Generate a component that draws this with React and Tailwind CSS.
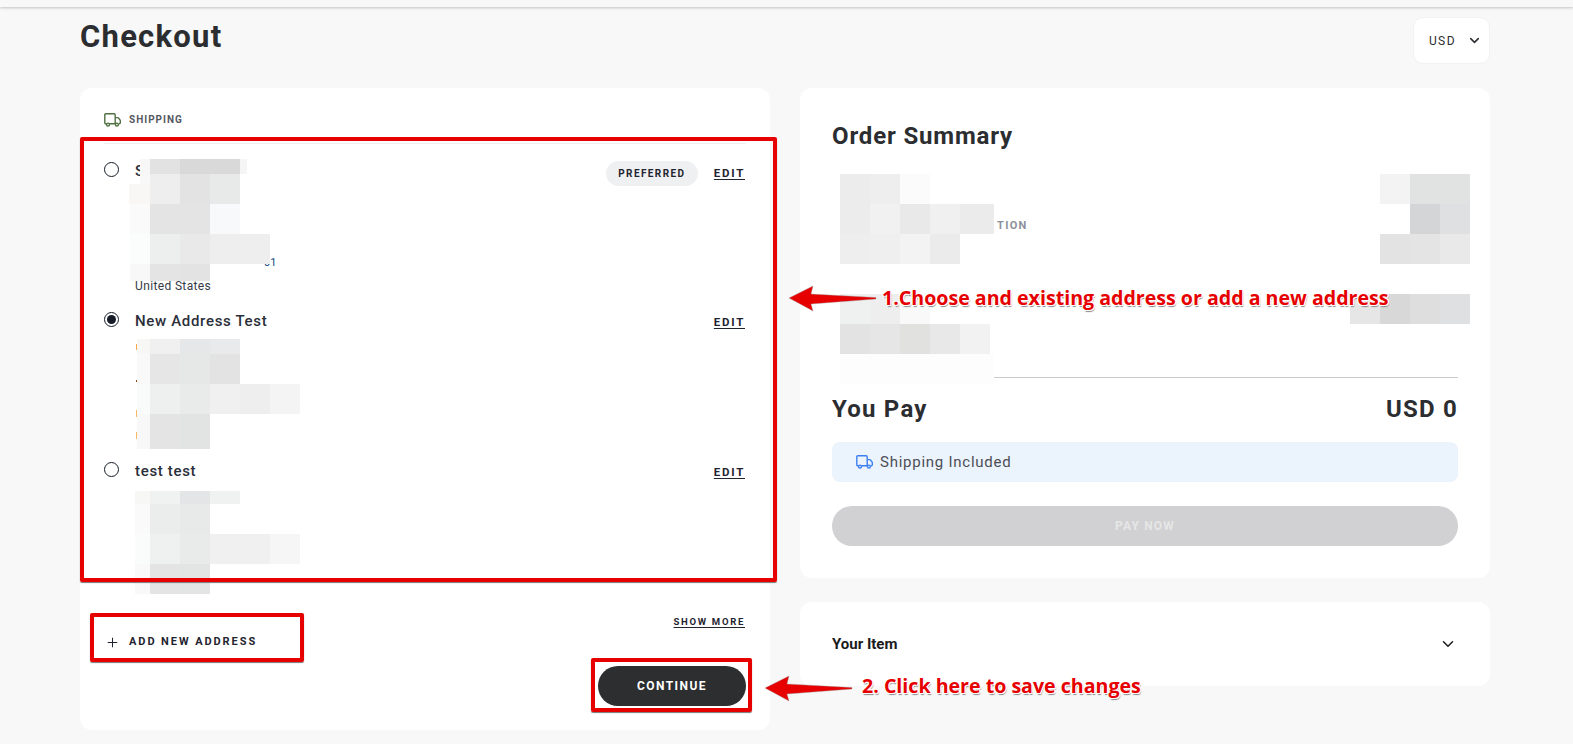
import React from "react";
import { ChevronDown, Plus } from "lucide-react";

const font = "font-['Roboto','Liberation_Sans',sans-serif]";

// pixelated (blurred out) customer data: [x, y, w, h, colour]
const addressMosaics = [
  [
    [4, 0, 10, 15, "#f7f7f7"], [14, 0, 30, 15, "#e2e2e2"], [44, 0, 60, 15, "#d9d9d9"], [104, 0, 7, 15, "#f5f5f5"],
    [4, 15, 10, 10, "#f8f8f8"], [14, 15, 30, 30, "#eeeeee"], [44, 15, 30, 30, "#e3e3e3"], [74, 15, 30, 30, "#e8e9e9"],
    [-7, 25, 21, 20, "#f8f7f6"],
    [-6, 45, 20, 30, "#fafafa"], [14, 45, 30, 30, "#e4e4e4"], [44, 45, 30, 30, "#e4e4e4"], [74, 45, 30, 30, "#f8f9fb"],
    [-6, 75, 20, 30, "#fbfcfc"], [14, 75, 30, 30, "#edeeee"], [44, 75, 30, 30, "#e9e9e9"], [74, 75, 60, 30, "#eeeeee"],
    [-6, 105, 20, 17, "#f8f8f8"], [14, 105, 30, 17, "#e4e4e4"], [44, 105, 30, 17, "#e2e3e2"],
  ],
  [
    // bits of the address text that stick out at the left of the mosaic
    [0, 5, 1, 6, "#f5a94a"], [0, 41, 1, 2, "#8a4a10"], [0, 71, 1, 7, "#f7b765"], [0, 93, 1, 7, "#f7b765"],
    [1, 0, 13, 15, "#f7f7f6"], [14, 0, 30, 15, "#f0f0f0"], [44, 0, 30, 15, "#e6e7e8"], [74, 0, 30, 15, "#e9eaeb"],
    [1, 15, 13, 30, "#f9f9f9"], [14, 15, 30, 30, "#e6e6e6"], [44, 15, 30, 30, "#e6e7e7"], [74, 15, 30, 30, "#e3e3e3"],
    [1, 45, 13, 30, "#f9fbfa"], [14, 45, 30, 30, "#eef0ef"], [44, 45, 30, 30, "#e9eaea"], [74, 45, 30, 30, "#f0f0f0"], [104, 45, 30, 30, "#eeeeee"], [134, 45, 30, 30, "#f4f4f4"],
    [1, 75, 13, 35, "#f8f8f8"], [14, 75, 30, 35, "#e4e4e4"], [44, 75, 30, 35, "#e2e3e3"],
  ],
  [
    [-1, 0, 15, 13, "#f7f7f6"], [14, 0, 30, 13, "#f0f1f1"], [44, 0, 30, 13, "#e4e5e7"], [74, 0, 30, 13, "#f0f1f1"],
    [-1, 13, 15, 30, "#fafafa"], [14, 13, 30, 30, "#ebecec"], [44, 13, 30, 30, "#e8e9e9"],
    [-1, 43, 15, 30, "#fafbfb"], [14, 43, 30, 30, "#eff0f0"], [44, 43, 30, 30, "#e9eaea"], [74, 43, 30, 30, "#f0f0f0"], [104, 43, 30, 30, "#f0f0f0"], [134, 43, 30, 30, "#f6f6f6"],
    [-1, 73, 15, 30, "#f9f9f9"], [14, 73, 30, 30, "#e4e4e4"], [44, 73, 30, 30, "#e3e4e4"],
  ],
];

const productMosaic = [
  [0, 0, 30, 30, "#ececec"], [30, 0, 30, 30, "#eeeeee"], [60, 0, 30, 30, "#fbfbfb"],
  [0, 30, 30, 30, "#ececec"], [30, 30, 30, 30, "#f1f1f1"], [60, 30, 30, 30, "#e9e9e9"], [90, 30, 30, 30, "#f0f0f0"], [120, 30, 34, 30, "#ebebeb"],
  [0, 60, 30, 30, "#eeeeee"], [30, 60, 30, 30, "#efefef"], [60, 60, 30, 30, "#f3f3f3"], [90, 60, 30, 30, "#ebebeb"],
];

const priceMosaic = [
  [30, 0, 30, 30, "#f3f3f3"], [60, 0, 60, 30, "#e1e2e2"],
  [60, 30, 30, 30, "#d4d5d7"], [90, 30, 30, 30, "#dfe0e2"],
  [30, 60, 30, 30, "#e3e3e3"], [60, 60, 30, 30, "#e4e4e4"], [90, 60, 30, 30, "#e9e9e9"],
];

const sellerMosaic = [
  [0, 0, 30, 30, "#eff0f0"], [30, 0, 30, 30, "#eeeeee"], [60, 0, 30, 30, "#f9f9f9"],
  [0, 30, 30, 30, "#e2e3e2"], [30, 30, 30, 30, "#e6e6e6"], [60, 30, 30, 30, "#e1e1e0"], [90, 30, 30, 30, "#e8e8e8"], [120, 30, 30, 30, "#f2f2f2"],
  [0, 60, 154, 30, "#fcfdfc"],
];

const sellerPriceMosaic = [
  [0, 0, 30, 30, "#e6e6e6"], [30, 0, 30, 30, "#d8d8d8"], [60, 0, 30, 30, "#dedede"], [90, 0, 30, 30, "#dfe0e2"],
];

const Mosaic = ({ blocks, className }) => (
  <svg className={`absolute overflow-visible ${className}`} width="1" height="1" shapeRendering="crispEdges">
    {blocks.map(([x, y, w, h, c], i) => (
      <rect key={i} x={x} y={y} width={w} height={h} fill={c} />
    ))}
  </svg>
);

const TruckIcon = ({ className, stroke }) => (
  <svg className={className} viewBox="0 0 17 14" fill="none" stroke={stroke} strokeWidth="1.4" strokeLinejoin="round">
    <path d="M2.4 10.8H1.8a1 1 0 0 1-1-1V1.7a1 1 0 0 1 1-1h8.4a1 1 0 0 1 1 1v9.1H5.6" />
    <path d="M11.2 4.6h2.3c.5 0 .8.2 1.1.5l1.3 1.6c.3.3.4.6.4 1v2.1a1 1 0 0 1-1 1h-.3M11.2 10.8h.1" />
    <circle cx="4" cy="11.6" r="1.5" />
    <circle cx="12.9" cy="11.6" r="1.5" />
  </svg>
);

const Radio = ({ checked }) => (
  <span className="flex h-[15px] w-[15px] shrink-0 items-center justify-center rounded-full border-[1.6px] border-[#151c28]">
    {checked && <span className="h-[9px] w-[9px] rounded-full bg-[#151c28]" />}
  </span>
);

const AddressRow = ({ name, checked, preferred, mosaic, mosaicTop, children }) => (
  <div className="relative h-[150px]">
    <div className="flex h-[20px] items-center">
      <Radio checked={checked} />
      <span className="mt-[5px] ml-[16px] text-[15px] font-medium tracking-[0.045em] text-[#2b2f3a]">{name}</span>
      <div className="ml-auto flex items-center">
        {preferred && (
          <span className="mt-[9px] mr-[16px] flex h-[25px] w-[92px] items-center justify-center rounded-full bg-[#eff0f2] text-[10px] font-bold tracking-[0.14em] text-[#1f2430]">
            PREFERRED
          </span>
        )}
        <a
          className={`mr-[1px] text-[11.5px] leading-[14px] font-bold tracking-[0.15em] text-[#1f2430] underline underline-offset-2 ${preferred ? "mt-[7px]" : "mt-[5px]"}`}
        >
          EDIT
        </a>
      </div>
    </div>
    {children}
    <Mosaic blocks={mosaic} className={`left-[32px] ${mosaicTop}`} />
  </div>
);

const Callout = ({ className, children }) => (
  <div
    className={`absolute font-['Open_Sans',sans-serif] font-bold whitespace-nowrap text-[#e60000] [text-shadow:-1px_-1px_0_#fff,1px_-1px_0_#fff,-1px_1px_0_#fff,1px_1px_0_#fff,1px_2px_1px_#888] ${className}`}
  >
    {children}
  </div>
);

const ArrowLeft = ({ className }) => (
  <svg className={`absolute ${className}`} width="90" height="28" viewBox="0 0 90 28">
    <path d="M1 14 L25 2 L23 10 L88 13.5 L88 15 L23 20 L25 27 Z" fill="#e60000" stroke="#999" strokeWidth="0.4" />
  </svg>
);

const App = () => {
  return (
    <div className={`relative h-[744px] w-[1573px] overflow-hidden bg-[#f8f8f8] ${font}`}>
      {/* page top bar */}
      <div className="h-[7px] bg-[#f8f8f8] shadow-[0_1px_3px_rgba(0,0,0,0.22)]" />

      <div className="ml-[80px] w-[1410px]">
        <div className="flex h-[81px] items-start justify-between pt-[10px]">
          <h1 className="mt-[1px] text-[31px] leading-[38px] font-bold tracking-[0.04em] text-[#2b2d30]">Checkout</h1>
          <button className="flex h-[47px] w-[77px] items-center justify-end gap-[11px] rounded-[10px] border border-[#f2f2f2] bg-white pr-[7px] text-[12px] tracking-[0.12em] text-[#2b2d30]">
            <span>USD</span>
            <ChevronDown size={15} strokeWidth={2.5} />
          </button>
        </div>

        <div className="grid grid-cols-[690px_690px] gap-[30px]">
          {/* shipping */}
          <div className="relative flex h-[642px] flex-col rounded-[12px] bg-white px-[24px]">
            <div className="flex h-[56px] items-center gap-[8px] border-b border-[#eeeeee] pt-[8px]">
              <TruckIcon className="h-[14px] w-[17px]" stroke="#4f7042" />
              <span className="text-[10px] font-bold tracking-[0.1em] text-[#55585f]">SHIPPING</span>
            </div>
            <div className="pt-[15px]">
              <AddressRow name="S" preferred mosaic={addressMosaics[0]} mosaicTop="top-0">
                <div className="absolute top-[96px] left-[160px] text-[11px] text-[#1a4a80]">01</div>
                <div className="absolute top-[118px] left-[31px] text-[12px] tracking-[0.03em] text-[#343a46]">
                  United States
                </div>
              </AddressRow>
              <AddressRow name="New Address Test" checked mosaic={addressMosaics[1]} mosaicTop="top-[30px]" />
              <AddressRow name="test test" mosaic={addressMosaics[2]} mosaicTop="top-[32px]" />
            </div>

            <div className="mt-[6px] flex justify-end">
              <a className="mr-[1px] text-[9.5px] leading-[14px] font-bold tracking-[0.18em] text-[#1f2430] underline underline-offset-2">
                SHOW MORE
              </a>
            </div>
            <div className="mt-[3px] flex h-[20px] items-center">
              <Plus size={15} strokeWidth={1.6} className="ml-[1px] text-[#1f2430]" />
              <span className="ml-[9px] text-[11px] font-bold tracking-[0.175em] text-[#1f2430]">ADD NEW ADDRESS</span>
            </div>
            <div className="mt-[14px] flex justify-end">
              <button className="flex h-[40px] w-[148px] items-center justify-center rounded-full bg-[#2d2e30] text-[12px] font-bold tracking-[0.12em] text-white">
                CONTINUE
              </button>
            </div>
          </div>

          <div className="flex flex-col gap-[24px]">
            {/* order summary */}
            <div className="relative flex h-[490px] flex-col rounded-[12px] bg-white px-[32px] pt-[33px]">
              <h2 className="text-[24px] leading-[30px] font-bold tracking-[0.035em] text-[#2b2d30]">Order Summary</h2>
              <div className="absolute top-[130px] left-[197px] text-[11px] font-bold tracking-[0.12em] text-[#8d9098]">TION</div>
              <Mosaic blocks={productMosaic} className="top-[86px] left-[40px]" />
              <Mosaic blocks={priceMosaic} className="top-[86px] left-[550px]" />
              <Mosaic blocks={sellerMosaic} className="top-[206px] left-[40px]" />
              <Mosaic blocks={sellerPriceMosaic} className="top-[206px] left-[550px]" />

              <div className="mt-[226px] ml-[162px] h-px bg-[#cccccc]" />
              <div className="mt-[14px] flex items-center justify-between text-[24px] leading-[34px] font-bold tracking-[0.05em] text-[#2b2d30]">
                <span>You Pay</span>
                <span>USD 0</span>
              </div>
              <div className="mt-[16px] flex h-[40px] items-center gap-[7px] rounded-[8px] bg-[#ebf3fd] pl-[24px] text-[15px] tracking-[0.05em] text-[#4b4e55]">
                <TruckIcon className="h-[14px] w-[17px]" stroke="#3d7ff0" />
                Shipping Included
              </div>
              <button className="mt-[24px] flex h-[40px] items-center justify-center rounded-full bg-[#d1d1d3] text-[12px] font-bold tracking-[0.1em] text-[#e6e6e7]">
                PAY NOW
              </button>
            </div>

            {/* your item */}
            <div className="flex h-[84px] items-center justify-between rounded-[12px] bg-white pr-[33px] pl-[32px]">
              <span className="text-[15px] font-bold text-[#1b1b1d]">Your Item</span>
              <ChevronDown size={18} strokeWidth={2} className="text-[#1b1b1d]" />
            </div>
          </div>
        </div>
      </div>

      {/* annotations drawn on top of the screenshot */}
      <div className="absolute top-[137px] left-[80px] h-[445px] w-[697px] rounded-[2px] border-4 border-[#e60000] shadow-[0_1px_1px_#777]" />
      <div className="absolute top-[613px] left-[90px] h-[49px] w-[214px] rounded-[2px] border-4 border-[#e60000] shadow-[0_1px_1px_#777]" />
      <div className="absolute top-[658px] left-[591px] h-[54px] w-[161px] rounded-[2px] border-4 border-[#e60000] shadow-[0_1px_1px_#777]" />
      <ArrowLeft className="top-[284px] left-[788px]" />
      <ArrowLeft className="top-[674px] left-[764px]" />
      <Callout className="top-[285px] left-[882px] text-[19.6px] leading-[26px]">
        1.Choose and existing address or add a new address
      </Callout>
      <Callout className="top-[673px] left-[862px] text-[19.6px] leading-[26px]">2. Click here to save changes</Callout>
    </div>
  );
};

export default App;
